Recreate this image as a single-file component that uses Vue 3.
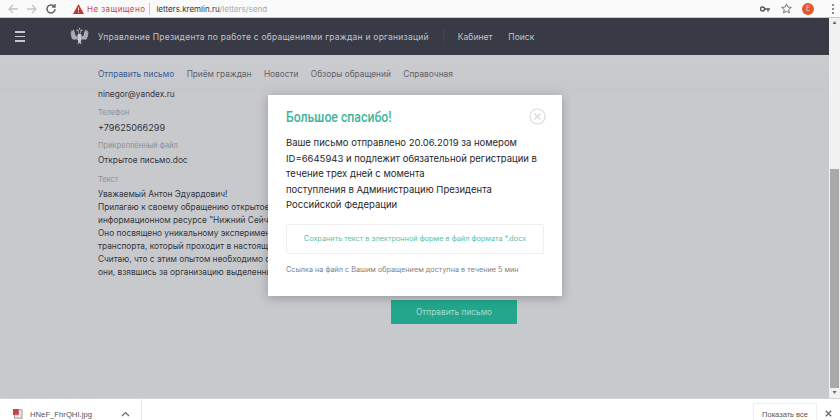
<template>
  <div class="window">
    <div class="toolbar">
      <div class="nav-icons">
        <svg width="14" height="14" viewBox="0 0 14 14"><path d="M12 7H3M7 3 3 7l4 4" class="ic-light" /></svg>
        <svg width="14" height="14" viewBox="0 0 14 14"><path d="M2 7h9M7 3l4 4-4 4" class="ic-light" /></svg>
        <svg width="14" height="14" viewBox="0 0 14 14"><path d="M11 7a4 4 0 1 1-1.200-2.900M11 2v3H8" class="ic-dark" /></svg>
      </div>
      <div class="address">
        <svg width="11" height="10" viewBox="0 0 11 10"><path d="M5.500 0 11 10H0z" fill="#c5352b" /><path d="M5.500 3.500v3M5.500 7.600v1" stroke="#fff" fill="none" /></svg>
        <span class="insecure">Не защищено</span>
        <span class="sep"></span>
        <span class="url">letters.kremlin.ru<span class="url-path">/letters/send</span></span>
      </div>
      <div class="tools">
        <svg width="10" height="8" viewBox="0 0 10 8"><circle cx="2.500" cy="4" r="2" fill="none" stroke="#555" stroke-width="1.400" /><path d="M4.500 4H10M8 4v2.500" stroke="#555" stroke-width="1.400" fill="none" /></svg>
        <svg class="star" width="11" height="11" viewBox="0 0 12 12"><path d="M6 1l1.500 3.400 3.700.4-2.800 2.400.8 3.600L6 9l-3.200 1.800.8-3.600L.8 4.800l3.700-.4z" fill="none" stroke="#666" /></svg>
        <span class="avatar">E</span>
        <span class="dots"><i></i><i></i><i></i></span>
      </div>
    </div>

    <div class="viewport">
      <div class="page">
        <header class="topbar">
          <div class="burger"><i></i><i></i><i></i></div>
          <svg class="emblem" width="19" height="19" viewBox="0 0 19 19">
            <path d="M9.500 6.500c-1.300 0-2.200 1-2.200 2.300v3.700l1 1.700-.8 3.300 2-1.700 2 1.700-.8-3.300 1-1.700V8.800c0-1.300-.9-2.300-2.200-2.300z" fill="#c9cad0" />
            <path d="M7.300 9.500C5.700 9.300 5 8 5.200 6.500L3.600 2.300 2.700 3.800 1.300 3.200v2.500L.3 5.500l1 3-.6.300 1.300 2.200-.4.600 2 1.200 3.700-.6zM11.700 9.500c1.600-.2 2.300-1.500 2.100-3l1.600-4.200.9 1.500 1.400-.6v2.500l1-.2-1 3 .6.300-1.300 2.200.4.600-2 1.200-3.700-.6z" fill="#a9abb3" />
            <path d="M8 6.300V4.200l-1.700-.6.700-1L8.500 3l.2 3.300zM11 6.300V4.200l1.700-.6-.7-1-1.500.4-.2 3.300z" fill="#c2c4ca" />
            <path d="M9.500.4l.8 1.400-.8 1.200-.8-1.200z" fill="#b6b8bf" />
          </svg>
          <span class="org">Управление Президента по работе с обращениями граждан и организаций</span>
          <span class="divider"></span>
          <a class="top-link">Кабинет</a>
          <a class="top-link">Поиск</a>
        </header>

        <nav class="subnav">
          <a v-for="(item, i) in navItems" :key="item" :class="{ active: i === 0 }">{{ item }}</a>
        </nav>

        <div class="content">
          <div class="value first">ninegor@yandex.ru</div>
          <div class="label">Телефон</div>
          <div class="value phone">+79625066299</div>
          <div class="label">Прикреплённый файл</div>
          <div class="value">Открытое письмо.doc</div>
          <div class="label">Текст</div>
          <div class="letter">
            <p v-for="line in letter" :key="line">{{ line }}</p>
          </div>
          <div class="send-row"><button class="send">Отправить письмо</button></div>
        </div>

        <div class="modal">
          <div class="modal-head">
            <h2>Большое спасибо!</h2>
            <svg width="17" height="17" viewBox="0 0 17 17"><circle cx="8.500" cy="8.500" r="7.500" fill="none" stroke="#dcdcdc" stroke-width="1.200" /><path d="M5.500 5.500l6 6M11.500 5.500l-6 6" stroke="#d6d6d6" stroke-width="1.200" /></svg>
          </div>
          <p class="modal-text">
            Ваше письмо отправлено 20.06.2019 за номером<br />
            ID=6645943 и подлежит обязательной регистрации в<br />
            течение трех дней с момента<br />
            поступления в Администрацию Президента<br />
            Российской Федерации
          </p>
          <div class="save-box">Сохранить текст в электронной форме в файл формата *.docx</div>
          <p class="modal-note">Ссылка на файл с Вашим обращением доступна в течение 5 мин</p>
        </div>
      </div>

      <div class="scrollbar">
        <span class="arrow">▲</span>
        <div class="track"><div class="thumb"></div></div>
        <span class="arrow">▼</span>
      </div>
    </div>

    <footer class="downloads">
      <div class="file">
        <svg width="11" height="10" viewBox="0 0 13 12"><rect x="3" y="1" width="9" height="10" fill="#e9e3e3" stroke="#9a8a8a" /><rect x="1" y="0" width="7" height="7" fill="#c9404a" /></svg>
        <span class="file-name">HNeF_FhrQHI.jpg</span>
        <svg class="chev" width="9" height="6" viewBox="0 0 9 6"><path d="M1 5l3.500-3.500L8 5" fill="none" stroke="#666" stroke-width="1.200" /></svg>
      </div>
      <div class="show-all">Показать все</div>
      <svg class="close" width="7" height="7" viewBox="0 0 9 9"><path d="M1 1l7 7M8 1L1 8" stroke="#666" stroke-width="1.500" /></svg>
    </footer>
  </div>
</template>

<script setup>
const navItems = ['Отправить письмо', 'Приём граждан', 'Новости', 'Обзоры обращений', 'Справочная']

const letter = [
  'Уважаемый Антон Эдуардович!',
  'Прилагаю к своему обращению открытое письмо',
  'информационном ресурсе "Нижний Сейчас"',
  'Оно посвящено уникальному эксперименту',
  'транспорта, который проходит в настоящее время',
  'Считаю, что с этим опытом необходимо ознакомиться',
  'они, взявшись за организацию выделенных полос'
]
</script>

<style>
html, body { margin: 0; overflow: hidden; }
</style>

<style scoped>
.window {
  width: 840px;
  height: 420px;
  display: flex;
  flex-direction: column;
  overflow: hidden;
  font-family: Inter, "Liberation Sans", sans-serif;
  background: #fff;
}

.toolbar {
  height: 18px;
  display: flex;
  align-items: center;
  background: #fafafa;
  border-bottom: 1px solid #c9c9c9;
  box-sizing: border-box;
}
.nav-icons { display: flex; gap: 5px; padding-left: 6px; width: 66px; box-sizing: border-box; }
.ic-light { fill: none; stroke: #c4c4c4; stroke-width: 1.300; }
.ic-dark { fill: none; stroke: #666; stroke-width: 1.500; }
.address { display: flex; align-items: center; gap: 5px; flex: 1; padding-left: 7px; font-size: 8.500px; }
.insecure { color: #c5473e; margin-left: -2px; font-size: 8px; letter-spacing: 0.055em; }
.sep { width: 1px; height: 12px; background: #c8c8c8; margin: 0 1px 0 -1px; }
.url { color: #333; font-size: 8px; }
.url-path { color: #a8a8a8; }
.tools { display: flex; align-items: center; padding-right: 5px; }
.star { margin-left: 11px; }
.avatar {
  width: 12px;
  height: 12px;
  border-radius: 50%;
  background: #e4572a;
  color: #fbd9c8;
  font-size: 7px;
  text-align: center;
  line-height: 12px;
  margin-left: 10px;
}
.dots { display: flex; flex-direction: column; gap: 2px; margin-left: 18px; margin-right: 1px; }
.dots i { width: 2px; height: 2px; background: #666; border-radius: 50%; }

.viewport { flex: 1; display: flex; min-height: 0; }
.page { flex: 1; position: relative; background: #c8c9cd; overflow: hidden; }

.topbar {
  height: 37px;
  background: #383a46;
  display: flex;
  align-items: center;
  color: #c3c5cb;
  font-size: 8.500px;
}
.burger { display: flex; flex-direction: column; gap: 3px; margin-left: 15px; }
.burger i { width: 10px; height: 1.500px; background: #c6c8cd; }
.emblem { margin-left: 45px; }
.org { margin-left: 9px; letter-spacing: 0.028em; }
.divider { width: 1px; height: 18px; background: #41434e; margin: 0 14px; }
.top-link { margin-right: 16px; }

.subnav {
  height: 37px;
  display: flex;
  align-items: center;
  gap: 12.500px;
  padding-left: 98px;
  font-size: 8.300px;
  color: #5f6168;
  background: linear-gradient(#cccdd0, #c6c7cb);
}
.subnav .active { color: #3b5a8e; }

.content { padding-left: 98px; color: #33353a; margin-top: -4px; }
.value { font-size: 8.300px; line-height: 13px; margin-bottom: 7.500px; }
.value.first { margin-bottom: 6px; }
.value.phone { font-size: 9.100px; margin-bottom: 6.500px; }
.label { font-size: 7.500px; line-height: 12px; color: #8d8f95; margin-bottom: 1.500px; }
.letter { font-size: 8.300px; line-height: 13px; white-space: nowrap; }
.letter p { margin: 0; }
.send-row { padding: 21px 0 0 293px; }
.send {
  display: block;
  width: 126px;
  height: 24px;
  border: 0;
  background: #23a78c;
  color: #a4dccf;
  font: inherit;
  font-size: 8.300px;
}

.modal {
  position: absolute;
  left: 268px;
  top: 77px;
  width: 294px;
  height: 201px;
  box-sizing: border-box;
  padding: 13px 18px 0;
  background: #fff;
  box-shadow: 0 2px 10px rgba(0, 0, 0, 0.25);
}
.modal-head { display: flex; justify-content: space-between; align-items: center; }
.modal-head svg { margin-right: -2px; }
.modal-head h2 {
  margin: 0;
  font-family: Roboto, sans-serif;
  font-size: 14px;
  font-weight: 500;
  color: #3fb59c;
  transform: scaleX(0.876);
  transform-origin: left;
}
.modal-text { margin: 10px 0 0; font-size: 9.500px; line-height: 15.500px; color: #26282c; white-space: nowrap; }
.save-box {
  margin-top: 11px;
  height: 28px;
  border: 1px solid #efefef;
  border-radius: 2px;
  display: flex;
  align-items: center;
  justify-content: center;
  color: #59bfa9;
  font-size: 7.300px;
}
.modal-note { margin: 11px 0 0; font-size: 7.250px; color: #7e7f85; white-space: nowrap; }

.scrollbar {
  width: 11px;
  background: #f1f1f1;
  display: flex;
  flex-direction: column;
  align-items: center;
}
.arrow { font-size: 4px; color: #666; line-height: 10px; height: 10px; }
.track { flex: 1; width: 100%; display: flex; flex-direction: column; justify-content: flex-end; }
.thumb { height: 219px; background: #a9a9a9; margin: 0 1px; }

.downloads {
  height: 22px;
  display: flex;
  align-items: flex-start;
  background: #fff;
  border-top: 1px solid #d4d4d4;
  box-sizing: border-box;
  overflow: hidden;
  font-family: "Liberation Sans", sans-serif;
  font-size: 8px;
  color: #555;
}
.file {
  width: 142px;
  height: 30px;
  display: flex;
  align-items: center;
  padding-left: 12px;
  box-sizing: border-box;
  border-right: 1px solid #ebebeb;
}
.file-name { margin-left: 7px; flex: 1; font-size: 7.700px; }
.chev { margin-right: 11px; }
.show-all {
  margin: 4px 0 0 auto;
  width: 64px;
  height: 24px;
  line-height: 22px;
  box-sizing: border-box;
  text-align: center;
  font-size: 7.500px;
  border: 1px solid #eee;
  border-radius: 2px;
}
.close { margin: 11px 8px 0 8px; }
</style>
